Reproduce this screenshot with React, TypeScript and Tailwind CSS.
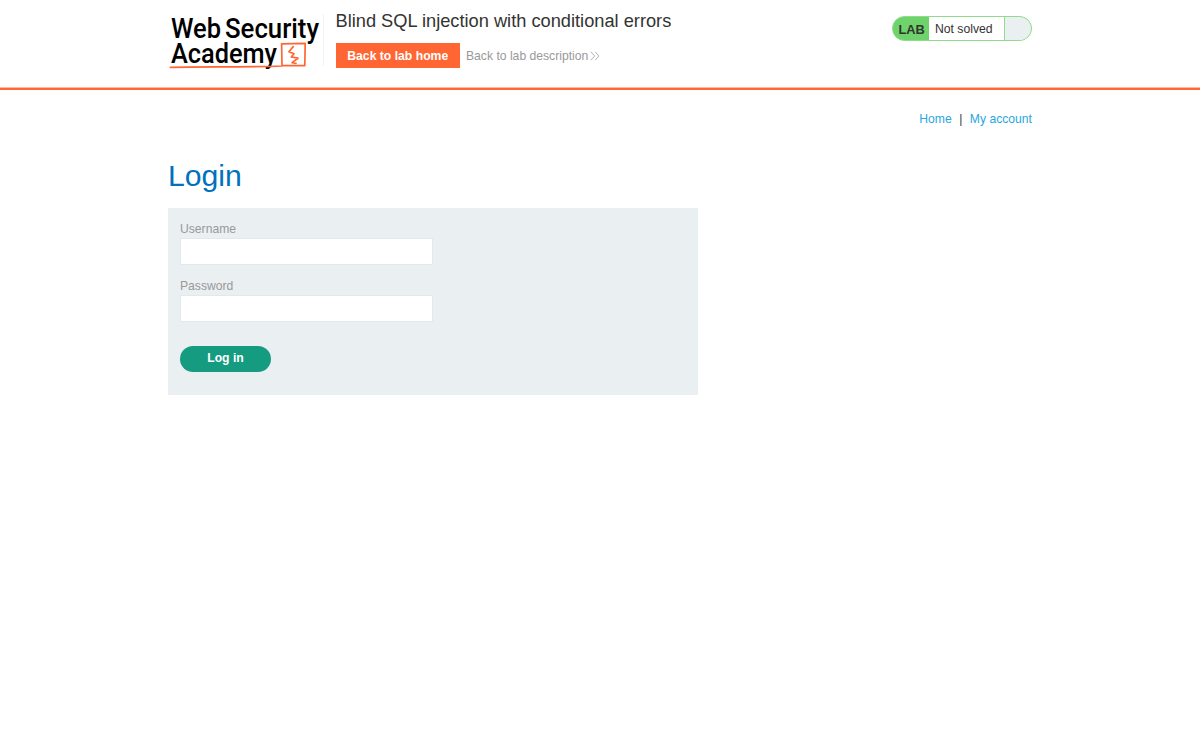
import React, { useState } from 'react';

function AcademyLogo() {
    return (
        <svg width="152" height="56" viewBox="0 0 152 56" className="block overflow-visible" role="img" aria-label="Web Security Academy">
            <g fill="#000" fontFamily="Roboto, sans-serif" fontSize="28.4" fontWeight="500">
                <text x="3" y="24.2" textLength="50" lengthAdjust="spacingAndGlyphs">Web</text>
                <text x="57" y="24.2" textLength="94" lengthAdjust="spacingAndGlyphs">Security</text>
                <text x="3" y="49" textLength="106" lengthAdjust="spacingAndGlyphs">Academy</text>
            </g>
            <g fill="none" stroke="#ff6633" strokeLinejoin="round" strokeLinecap="round">
                <path d="M2.4 53.4 C35 52.4 75 53.6 114 52 L113.6 29.8 L137.2 29.4 L136.8 51.6 L115 51.6" strokeWidth="1.7" />
                <path d="M125.2 32.6 L120.9 37.7 L126 39.7 L123.3 43 L130 44.2 L124 48.6 L128 49.4" strokeWidth="1.7" />
            </g>
        </svg>
    );
}

function LabStatus() {
    return (
        <div className="flex h-[25px] w-[140px] rounded-full border border-[#8fdd8a] bg-[#6fd36b] overflow-hidden text-[12.2px] leading-[25px] text-[#333332]">
            <span className="w-[36px] pl-[5.5px] font-bold text-[12.8px]">LAB</span>
            <span className="w-[76px] bg-white pl-[6px] border-r border-[#8fdd8a] whitespace-nowrap">Not solved</span>
            <span className="flex-1 bg-[#eaeff2]" />
        </div>
    );
}

function Header() {
    return (
        <header className="h-[90px] border-b-2 border-[#ff6633] shadow-[inset_0_-1px_0_#ffb9a0]">
            <div className="mx-auto flex w-[864px] items-start">
                <div className="mt-[14px] h-[52px] w-[156px] shrink-0 border-r border-[#f2f2f2]">
                    <AcademyLogo />
                </div>
                <div className="ml-[11.5px] flex-1 pt-[9px]">
                    <h2 className="h-[34px] text-[18.24px] leading-[23px] text-[#333332] whitespace-nowrap">
                        Blind SQL injection with conditional errors
                    </h2>
                    <div className="flex items-center">
                        <a href="#" className="h-[25px] w-[124.5px] bg-[#ff6633] text-center text-[12.2px] leading-[26px] font-bold text-white whitespace-nowrap">
                            Back to lab home
                        </a>
                        <a href="#" className="ml-[6px] flex h-[25px] items-center text-[12.16px] leading-[26px] text-[#999] whitespace-nowrap">
                            Back to lab description
                            <svg width="10" height="10" viewBox="0 0 10 10" className="ml-[2px]" fill="none" stroke="#aaa" strokeWidth="0.9">
                                <path d="M0.8 0.8 L4.6 5 L0.8 9.2 M5.2 0.8 L9 5 L5.2 9.2" />
                            </svg>
                        </a>
                    </div>
                </div>
                <div className="mt-[16px]">
                    <LabStatus />
                </div>
            </div>
        </header>
    );
}

function Field({ label, type, value, onChange }: { label: string, type: string, value: string, onChange: (v: string) => void }) {
    return (
        <label className="mb-[12px] block text-[12.16px] leading-[18px] text-[#999]">
            <span className="block">{label}</span>
            <input
                type={type}
                value={value}
                onChange={e => onChange(e.target.value)}
                className="block h-[27px] w-[253.4px] border border-[#e3e8ea] bg-white px-2 text-[#333332] outline-none"
            />
        </label>
    );
}

export default function App() {
    const [username, setUsername] = useState('');
    const [password, setPassword] = useState('');

    return (
        <div className="min-h-[745px] bg-white font-['Liberation_Sans',Arial,sans-serif]">
            <Header />
            <main className="mx-auto w-[864px]">
                <nav className="flex justify-end pt-[20px] text-[12.16px] leading-[19px] text-[#333332]">
                    <a href="#" className="text-[#29a7de]">Home</a>
                    <span className="mx-[7.5px]">|</span>
                    <a href="#" className="text-[#29a7de]">My account</a>
                </nav>
                <h1 className="mt-[27px] h-[52px] text-[30.2px] leading-[40px] text-[#0071bc]">Login</h1>
                <form className="flex h-[187.4px] w-[530.4px] flex-col items-start bg-[#eaeff2] px-[12px] pt-[12px]" onSubmit={e => e.preventDefault()}>
                    <Field label="Username" type="text" value={username} onChange={setUsername} />
                    <Field label="Password" type="password" value={password} onChange={setPassword} />
                    <button type="submit" className="mt-[12px] h-[25.5px] w-[91px] rounded-full bg-[#159c80] pb-px text-[12.2px] font-bold text-white">
                        Log in
                    </button>
                </form>
            </main>
        </div>
    );
}
